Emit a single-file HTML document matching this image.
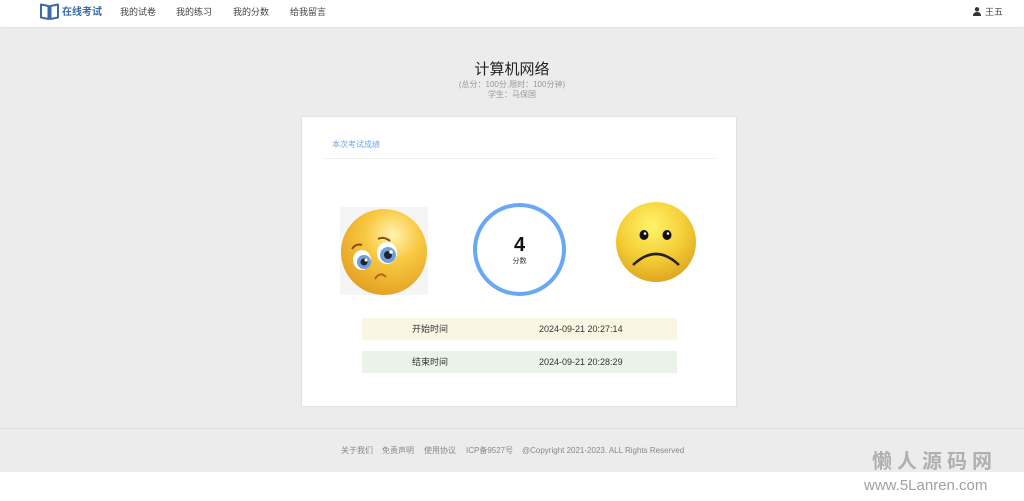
<!DOCTYPE html>
<html><head><meta charset="utf-8"><style>
*{margin:0;padding:0;box-sizing:border-box}
body{width:1024px;height:501px;background:#fff;font-family:"Liberation Sans","Noto Sans CJK SC",sans-serif;position:relative;overflow:hidden}
.nav{position:absolute;left:0;top:0;width:1024px;height:27px;background:#fff;box-shadow:0 1px 2px rgba(0,0,0,.06)}
.nav span{position:absolute;top:0;line-height:25px;font-size:9px;color:#444}
.main{position:absolute;left:0;top:27px;width:1024px;height:401px;background:#ececec}
.foot{position:absolute;left:0;top:428px;width:1024px;height:44px;background:#ececec;border-top:1px solid #e0e0e0}
.foot span{position:absolute;top:16px;line-height:12px;font-size:8px;color:#888}
.card{position:absolute;left:301px;top:116px;width:436px;height:291px;background:#fff;border:1px solid #e2e2e2}
.row{position:absolute;left:60px;width:315px;height:22px;font-size:9px;color:#333}
.row span{position:absolute;top:0;line-height:22px}
</style></head><body>
<div class="main">
 <div style="position:absolute;left:0;width:1024px;top:33px;line-height:20px;text-align:center;font-size:15px;color:#222">计算机网络</div>
 <div style="position:absolute;left:0;width:1024px;top:52px;line-height:11px;text-align:center;font-size:8px;color:#999">(总分：100分,限时：100分钟)</div>
 <div style="position:absolute;left:0;width:1024px;top:62px;line-height:11px;text-align:center;font-size:8px;color:#999">学生：马保国</div>
</div>
<div class="nav">
 <svg style="position:absolute;left:40px;top:3px" width="19" height="17" viewBox="0 0 19 17"><path d="M1 1.5 L8.5 3 L8.5 16 L1 14.5 Z M18 1.5 L10.5 3 L10.5 16 L18 14.5 Z" fill="none" stroke="#3a6aa8" stroke-width="2" stroke-linejoin="round"/></svg>
 <span style="left:62px;font-size:10px;color:#3a6aa8;font-weight:bold">在线考试</span>
 <span style="left:120px">我的试卷</span><span style="left:176px">我的练习</span><span style="left:233px">我的分数</span><span style="left:290px">给我留言</span>
 <svg style="position:absolute;left:973px;top:7px" width="8" height="9" viewBox="0 0 8 9"><circle cx="4" cy="2.3" r="2.2" fill="#333"/><path d="M0 9 Q0 5 4 5 Q8 5 8 9Z" fill="#333"/></svg>
 <span style="left:985px">王五</span>
</div>
<div class="card">
 <div style="position:absolute;left:30px;top:22px;line-height:12px;font-size:8px;color:#6aa8f0">本次考试成绩</div>
 <div style="position:absolute;left:21px;top:41px;width:393px;height:1px;background:#eee"></div>
 <svg style="position:absolute;left:38px;top:90px" width="88" height="88" viewBox="0 0 88 88">
  <rect width="88" height="88" fill="#f5f5f5"/>
  <defs><radialGradient id="g1" cx="0.6" cy="0.3" r="0.8"><stop offset="0" stop-color="#fff3b0"/><stop offset="0.4" stop-color="#f8c840"/><stop offset="1" stop-color="#e09a20"/></radialGradient>
  <radialGradient id="g2" cx="0.45" cy="0.3" r="0.8"><stop offset="0" stop-color="#fff46a"/><stop offset="0.5" stop-color="#f5cf38"/><stop offset="1" stop-color="#d89a1a"/></radialGradient></defs>
  <circle cx="44" cy="45" r="43" fill="url(#g1)"/>
  <ellipse cx="22" cy="53" rx="9" ry="10" fill="#fff"/><circle cx="24" cy="55" r="7" fill="#6fa0d8"/><circle cx="24" cy="55" r="3.5" fill="#223"/><circle cx="26" cy="53" r="1.5" fill="#fff"/>
  <ellipse cx="47" cy="46" rx="10" ry="11" fill="#fff"/><circle cx="48" cy="48" r="8" fill="#6fa0d8"/><circle cx="48" cy="48" r="4" fill="#223"/><circle cx="51" cy="45" r="1.8" fill="#fff"/>
  <path d="M12 42 Q16 36 22 38 M38 32 Q44 29 50 34" stroke="#8a4a10" stroke-width="2" fill="none"/>
  <path d="M35 72 Q40 64 46 70" stroke="#b06a10" stroke-width="2" fill="none"/>
 </svg>
 <div style="position:absolute;left:171px;top:86px;width:93px;height:93px;border:4px solid #6aa8f5;border-radius:50%"></div>
 <div style="position:absolute;left:171px;top:116px;line-height:24px;width:93px;text-align:center;font-size:20px;font-weight:bold;color:#111">4</div>
 <div style="position:absolute;left:171px;top:140px;line-height:10px;width:93px;text-align:center;font-size:7px;color:#333">分数</div>
 <svg style="position:absolute;left:313px;top:84px" width="82" height="82" viewBox="0 0 82 82">
  <circle cx="41" cy="41" r="40" fill="url(#g2)"/>
  <ellipse cx="29" cy="34" rx="4.5" ry="5" fill="#111"/><ellipse cx="52" cy="34" rx="4.5" ry="5" fill="#111"/>
  <circle cx="30" cy="32.5" r="1.3" fill="#fff"/><circle cx="53" cy="32.5" r="1.3" fill="#fff"/>
  <path d="M18 64 Q41 42 64 64" stroke="#222" stroke-width="2.5" fill="none"/>
 </svg>
 <div class="row" style="top:201px;background:#faf6e4"><span style="left:50px">开始时间</span><span style="left:177px">2024-09-21 20:27:14</span></div>
 <div class="row" style="top:234px;background:#eaf3e8"><span style="left:50px">结束时间</span><span style="left:177px">2024-09-21 20:28:29</span></div>
</div>
<div class="foot">
 <span style="left:341px">关于我们</span><span style="left:382px">免责声明</span><span style="left:424px">使用协议</span><span style="left:466px">ICP备9527号</span><span style="left:522px">@Copyright 2021-2023. ALL Rights Reserved</span>
</div>
<div style="position:absolute;left:872px;top:449px;line-height:26px;font-size:20px;font-weight:bold;color:#b0b0b0;letter-spacing:5px">懒人源码网</div>
<div style="position:absolute;left:864px;top:477px;line-height:18px;font-size:15px;color:#a0a0a0">www.5Lanren.com</div>
</body></html>
